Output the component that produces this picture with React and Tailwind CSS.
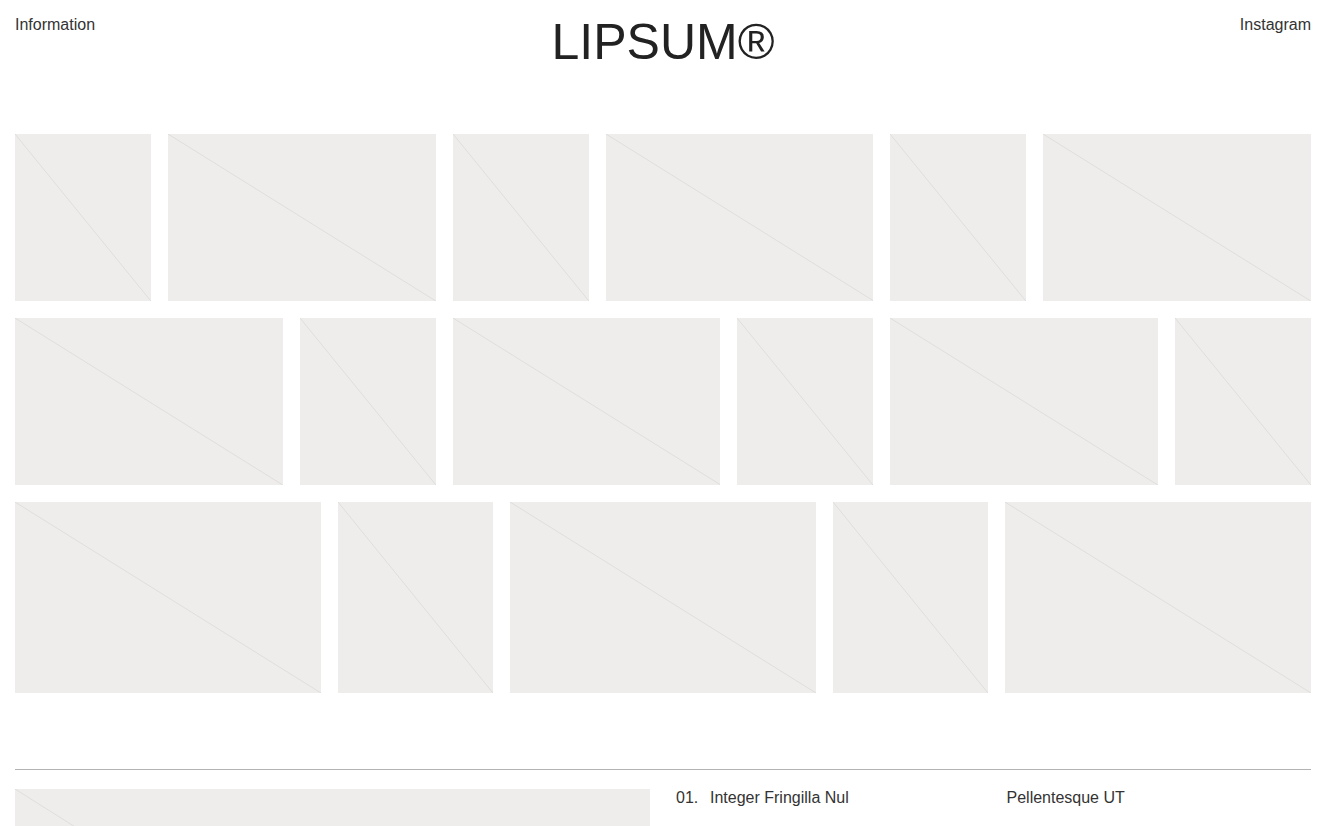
import React from "react"

// Placeholder image box with a single diagonal hairline
function Tile({ className = "" }) {
    return (
        <div className={`relative bg-[#eeedeb] overflow-hidden ${className}`}>
            <svg className="absolute inset-0 w-full h-full" viewBox="0 0 100 100" preserveAspectRatio="none">
                <line x1="0" y1="0" x2="100" y2="100" stroke="#dfdedc" strokeWidth="1" vectorEffect="non-scaling-stroke" />
            </svg>
        </div>
    )
}

export default function App() {
    return (
        <div className="min-h-screen bg-white text-[#333] font-['Liberation_Sans',Arial,sans-serif] overflow-hidden">
            {/* --- HEADER --- */}
            <header className="flex justify-between items-start pl-[15px] pr-[19px] pt-[13px]">
                <a className="text-[16px] leading-6 w-[120px]">Information</a>
                <h1 className="text-[50px] leading-none mt-[4px] text-[#222]">LIPSUM®</h1>
                <a className="text-[16px] leading-6 w-[120px] text-right">Instagram</a>
            </header>

            {/* --- GALLERY --- */}
            <section className="mt-[67px] pl-[15px] pr-[19px] flex flex-col gap-[17px]">
                <div className="grid grid-cols-[136fr_268fr_136fr_268fr_136fr_268fr] gap-[17px] h-[167px]">
                    <Tile />
                    <Tile />
                    <Tile />
                    <Tile />
                    <Tile />
                    <Tile />
                </div>
                <div className="grid grid-cols-[268fr_136fr_268fr_136fr_268fr_136fr] gap-[17px] h-[167px]">
                    <Tile />
                    <Tile />
                    <Tile />
                    <Tile />
                    <Tile />
                    <Tile />
                </div>
                <div className="grid grid-cols-[306fr_155fr_306fr_155fr_306fr] gap-[17px] h-[191px]">
                    <Tile />
                    <Tile />
                    <Tile />
                    <Tile />
                    <Tile />
                </div>
            </section>

            {/* --- LIST --- */}
            <section className="mt-[76px] pl-[15px] pr-[19px]">
                <div className="border-t border-[#b3b3b3]" />
                <div className="grid grid-cols-4 gap-[26px] pt-[19px]">
                    <Tile className="col-span-2 h-[400px]" />
                    <div className="flex text-[16px] leading-[18px]">
                        <span className="w-[34px]">01.</span>
                        <span>Integer Fringilla Nul</span>
                    </div>
                    <div className="text-[16px] leading-[18px]">Pellentesque UT</div>
                </div>
            </section>
        </div>
    )
}
